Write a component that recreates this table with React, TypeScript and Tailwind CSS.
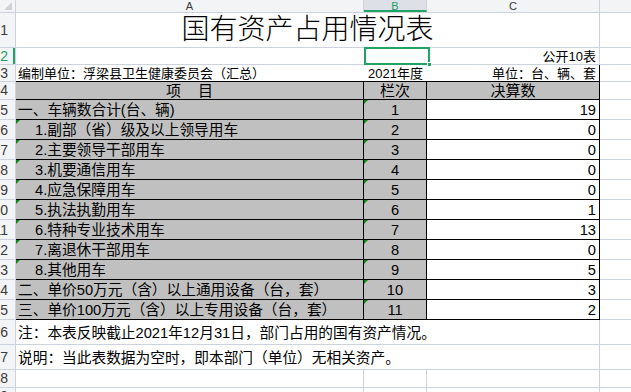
import React from "react";

const GRID = "border-[#cdd3de]";
const FONT = "font-['Liberation_Sans','Noto_Sans_CJK_SC',sans-serif]";

interface DataRow {
    item: string;
    indent: boolean;
    no: number;
    value: number;
}

const rows: DataRow[] = [
    { item: "一、车辆数合计(台、辆)", indent: false, no: 1, value: 19 },
    { item: "1.副部（省）级及以上领导用车", indent: true, no: 2, value: 0 },
    { item: "2.主要领导干部用车", indent: true, no: 3, value: 0 },
    { item: "3.机要通信用车", indent: true, no: 4, value: 0 },
    { item: "4.应急保障用车", indent: true, no: 5, value: 0 },
    { item: "5.执法执勤用车", indent: true, no: 6, value: 1 },
    { item: "6.特种专业技术用车", indent: true, no: 7, value: 13 },
    { item: "7.离退休干部用车", indent: true, no: 8, value: 0 },
    { item: "8.其他用车", indent: true, no: 9, value: 5 },
    { item: "二、单价50万元（含）以上通用设备（台，套）", indent: false, no: 10, value: 3 },
    { item: "三、单价100万元（含）以上专用设备（台，套）", indent: false, no: 11, value: 2 },
];

// little green "number stored as text" marker
const Flag: React.FC = () => (
    <span className="absolute top-0 left-0 w-0 h-0 border-t-[4px] border-r-[4px] border-t-[#118a11] border-r-transparent" />
);

const RowHead: React.FC<{ n: number; active?: boolean }> = ({ n, active }) => (
    <div
        className={`relative w-[16px] shrink-0 flex justify-end items-center overflow-hidden bg-[#f3f4f6] border-r border-b ${GRID} pr-[7px] font-['Liberation_Sans',sans-serif] text-[14px] ${active ? "text-[#1f9e64]" : "text-[#3a3a3a]"}`}
    >
        {n}
        {active && <span className="absolute right-0 top-0 bottom-0 w-[2px] bg-[#21a366]" />}
    </div>
);

const App: React.FC = () => {
    return (
        <div className={`w-[631px] h-[392px] overflow-hidden bg-white text-black ${FONT}`}>
            {/* column letters */}
            <div className={`flex h-[13px] border-b ${GRID} bg-[#f3f4f6] font-['Liberation_Sans',sans-serif] text-[11px] leading-[12px] text-[#3a3a3a]`}>
                <div className={`w-[16px] shrink-0 border-r ${GRID} flex items-end justify-end pr-[3px] pb-[2px]`}>
                    <svg width="8" height="8" viewBox="0 0 8 8">
                        <polygon points="8,0 8,8 0,8" fill="#cfd2d6" />
                    </svg>
                </div>
                <div className={`w-[348px] shrink-0 border-r ${GRID} flex justify-center`}>A</div>
                <div className={`w-[63px] shrink-0 border-r ${GRID} flex justify-center bg-[#dde1e7] text-[#1f9e64] border-b-2 border-b-[#21a366]`}>B</div>
                <div className={`w-[173px] shrink-0 border-r ${GRID} flex justify-center`}>C</div>
                <div className="flex-1" />
            </div>

            {/* row 1: title */}
            <div className="flex h-[35px]">
                <RowHead n={1} />
                <div className={`w-[584px] shrink-0 border-r border-b ${GRID} flex items-end justify-center text-[28px] leading-[32px] pb-[1px] font-light`}>
                    国有资产占用情况表
                </div>
                <div className={`flex-1 border-b ${GRID}`} />
            </div>

            {/* row 2 */}
            <div className="flex h-[17px] text-[13px] leading-[15px]">
                <RowHead n={2} active />
                <div className={`w-[348px] shrink-0 border-b ${GRID}`} />
                <div className={`relative w-[63px] shrink-0 border-b ${GRID}`}>
                    <div className="absolute -top-[1px] left-0 w-[66px] h-[18px] border-2 border-[#21a366]" />
                    <div className="absolute left-[63px] top-[14px] w-[5px] h-[5px] bg-[#21a366] border border-white" />
                </div>
                <div className={`w-[173px] shrink-0 border-r border-b ${GRID} flex items-end justify-end pr-[3px]`}>
                    公开10表
                </div>
                <div className={`flex-1 border-b ${GRID}`} />
            </div>

            {/* row 3 */}
            <div className="flex h-[17px] text-[13px] leading-[15px]">
                <RowHead n={3} />
                <div className="w-[348px] shrink-0 border-b border-black flex items-end pl-[2px]">
                    编制单位：浮梁县卫生健康委员会（汇总）
                </div>
                <div className="w-[63px] shrink-0 border-b border-black flex items-end justify-center">
                    2021年度
                </div>
                <div className="w-[173px] shrink-0 border-r border-b border-black flex items-end justify-end pr-[3px]">
                    单位：台、辆、套
                </div>
                <div className={`flex-1 border-b ${GRID}`} />
            </div>

            {/* row 4: table head */}
            <div className="flex h-[18px] text-[15px] leading-[17px]">
                <RowHead n={4} />
                <div className="w-[348px] shrink-0 bg-[#c0c0c0] border-r border-b border-black flex items-end justify-center gap-[17px]">
                    <span>项</span>
                    <span>目</span>
                </div>
                <div className="w-[63px] shrink-0 bg-[#c0c0c0] border-r border-b border-black flex items-end justify-center">
                    栏次
                </div>
                <div className="w-[173px] shrink-0 bg-[#c0c0c0] border-r border-b border-black flex items-end justify-center">
                    决算数
                </div>
                <div className={`flex-1 border-b ${GRID}`} />
            </div>

            {/* rows 5 - 15 */}
            {rows.map((r, i) => (
                <div key={r.no} className="flex h-[20px] text-[14.7px] leading-[18px]">
                    <RowHead n={i + 5} />
                    <div
                        className={`relative w-[348px] shrink-0 bg-[#c0c0c0] border-r border-b border-black flex items-end whitespace-nowrap ${r.indent ? "pl-[19px]" : "pl-[2px]"}`}
                    >
                        {r.indent && <Flag />}
                        {r.item}
                    </div>
                    <div className="relative w-[63px] shrink-0 bg-[#c0c0c0] border-r border-b border-black flex items-end justify-center">
                        <Flag />
                        {r.no}
                    </div>
                    <div className="w-[173px] shrink-0 border-r border-b border-black flex items-end justify-end pr-[3px]">
                        {r.value}
                    </div>
                    <div className={`flex-1 border-b ${GRID}`} />
                </div>
            ))}

            {/* notes */}
            <div className="flex h-[25px] text-[14.7px] leading-[18px]">
                <RowHead n={16} />
                <div className={`w-[584px] shrink-0 border-r border-b ${GRID} flex items-end pl-[2px] pb-[2px] whitespace-nowrap`}>
                    注：本表反映截止2021年12月31日，部门占用的国有资产情况。
                </div>
                <div className={`flex-1 border-b ${GRID}`} />
            </div>
            <div className="flex h-[25px] text-[14.7px] leading-[18px]">
                <RowHead n={17} />
                <div className={`w-[584px] shrink-0 border-r border-b ${GRID} flex items-end pl-[2px] pb-[2px] whitespace-nowrap`}>
                    说明：当此表数据为空时，即本部门（单位）无相关资产。
                </div>
                <div className={`flex-1 border-b ${GRID}`} />
            </div>

            {/* empty rows */}
            {[18, 19].map((n) => (
                <div key={n} className="flex h-[18px]">
                    <RowHead n={n} />
                    <div className={`w-[348px] shrink-0 border-r border-b ${GRID}`} />
                    <div className={`w-[63px] shrink-0 border-r border-b ${GRID}`} />
                    <div className={`w-[173px] shrink-0 border-r border-b ${GRID}`} />
                    <div className={`flex-1 border-b ${GRID}`} />
                </div>
            ))}
        </div>
    );
};

export default App;
